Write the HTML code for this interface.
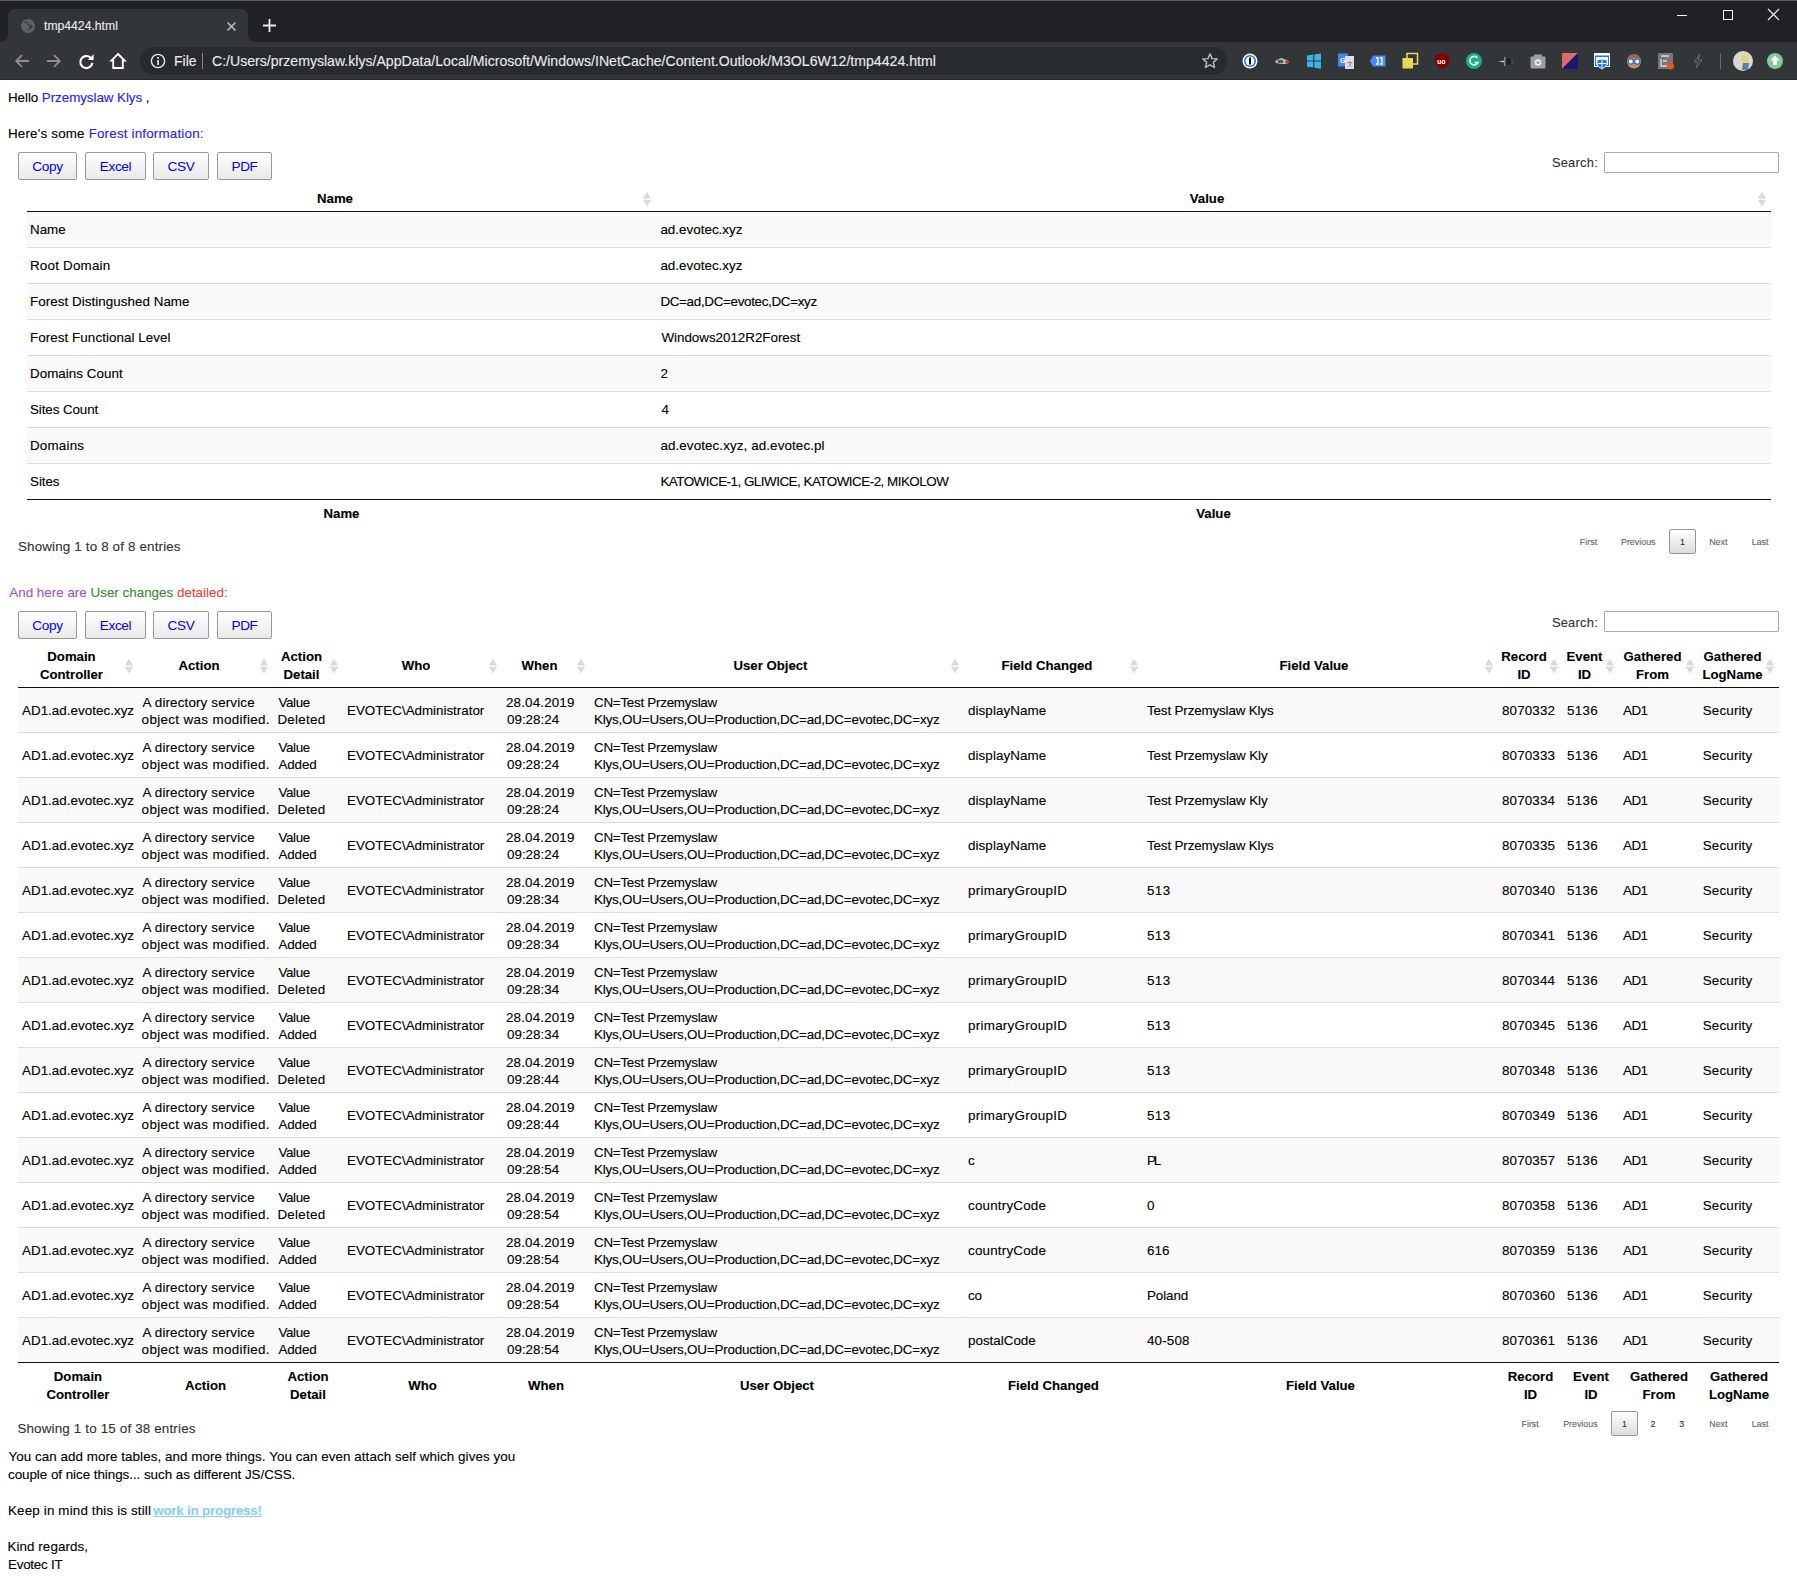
<!DOCTYPE html>
<html><head><meta charset="utf-8"><title>tmp4424.html</title><style>
html,body{margin:0;padding:0;}
body{width:1797px;height:1585px;overflow:hidden;position:relative;background:#fff;font-family:"Liberation Sans",sans-serif;}
.t{position:absolute;white-space:nowrap;font-size:13.4px;line-height:18px;color:#000;-webkit-text-stroke:0.12px currentColor;}
.btn{position:absolute;border:1px solid #999;border-radius:2px;background:linear-gradient(to bottom,#fff 0%,#e9e9e9 100%);font-family:"Liberation Sans",sans-serif;font-size:13.6px;line-height:27px;letter-spacing:-0.35px;text-align:center;color:#0000ff;}
.pgb{position:absolute;border:1px solid #979797;border-radius:2px;background:linear-gradient(to bottom,#fff 0%,#dcdcdc 100%);}
</style></head>
<body>
<div id="chrome" style="position:absolute;left:0;top:0;width:1797px;height:80px;background:#202124;overflow:hidden">
<div style="position:absolute;left:0;top:0;width:1797px;height:1px;background:#5b5a59"></div>
<div style="position:absolute;left:0;top:42px;width:1797px;height:37px;background:#333639"></div>
<div style="position:absolute;left:0;top:79px;width:1797px;height:1px;background:#262727"></div>
<div style="position:absolute;left:8px;top:9px;width:240px;height:34px;background:#333639;border-radius:7px 7px 0 0"></div>
<svg style="position:absolute;left:0;top:34px" width="8" height="8"><path d="M0 8 Q8 8 8 0 L8 8Z" fill="#333639"/></svg>
<svg style="position:absolute;left:248px;top:34px" width="8" height="8"><path d="M8 8 Q0 8 0 0 L0 8Z" fill="#333639"/></svg>
<svg style="position:absolute;left:20px;top:18px" width="16" height="16" viewBox="0 0 16 16"><circle cx="8" cy="8" r="7" fill="#5f6368"/><path d="M3 6 Q5 3 8 3 Q6 5 8 7 Q10 8 9 10 Q8 12 6 13 Q9 12 12 10 Q13 9 12 7 Q10 8 9 6 Q8 4 5 5Z" fill="#333639" opacity="0.9"/></svg>
<div class="t" style="left:44px;top:18px;font-size:12.2px;line-height:16px;color:#e8eaed">tmp4424.html</div>
<svg style="position:absolute;left:226px;top:21px" width="11" height="11" viewBox="0 0 11 11"><path d="M1.5 1.5 L9.5 9.5 M9.5 1.5 L1.5 9.5" stroke="#bdc1c6" stroke-width="1.5"/></svg>
<svg style="position:absolute;left:262px;top:18px" width="15" height="15" viewBox="0 0 15 15"><path d="M7.5 1 L7.5 14 M1 7.5 L14 7.5" stroke="#e8eaed" stroke-width="1.8"/></svg>
<svg style="position:absolute;left:1677px;top:15px" width="10" height="2"><rect width="10" height="1" fill="#ffffff"/></svg>
<svg style="position:absolute;left:1722px;top:9px" width="12" height="12"><rect x="1.5" y="1.5" width="9" height="9" fill="none" stroke="#ffffff" stroke-width="1"/></svg>
<svg style="position:absolute;left:1767px;top:8px" width="13" height="13" viewBox="0 0 13 13"><path d="M1 1 L12 12 M12 1 L1 12" stroke="#e8eaed" stroke-width="1.3"/></svg>
<svg style="position:absolute;left:14px;top:53px" width="16" height="16" viewBox="0 0 16 16"><path d="M15 8 H2.5 M8 2.2 L2.2 8 L8 13.8" fill="none" stroke="#8d8e90" stroke-width="1.8"/></svg>
<svg style="position:absolute;left:46px;top:53px" width="16" height="16" viewBox="0 0 16 16"><path d="M1 8 H13.5 M8 2.2 L13.8 8 L8 13.8" fill="none" stroke="#8d8e90" stroke-width="1.8"/></svg>
<svg style="position:absolute;left:77.5px;top:52.7px" width="17" height="17" viewBox="0 0 17 17"><path d="M14.3 9.8 A6 6 0 1 1 12.4 4.6" fill="none" stroke="#ffffff" stroke-width="2.2"/><path d="M15.6 1.2 V7 H9.8Z" fill="#ffffff"/></svg>
<svg style="position:absolute;left:109px;top:52px" width="18" height="18" viewBox="0 0 18 18"><path d="M9 2 L15.6 8.6 H13.8 V16 H4.2 V8.6 H2.4Z" fill="none" stroke="#ffffff" stroke-width="1.9" stroke-linejoin="miter"/></svg>
<div style="position:absolute;left:140px;top:47px;width:1087px;height:28px;background:#282b2e;border-radius:14px"></div>
<svg style="position:absolute;left:150px;top:53px" width="16" height="16" viewBox="0 0 16 16"><circle cx="8" cy="8" r="6.6" fill="none" stroke="#e8eaed" stroke-width="1.4"/><rect x="7.2" y="7" width="1.7" height="5" fill="#e8eaed"/><rect x="7.2" y="4" width="1.7" height="1.7" fill="#e8eaed"/></svg>
<div class="t" style="left:174px;top:53px;font-size:14px;line-height:16px;color:#e8eaed">File</div>
<div style="position:absolute;left:202px;top:53px;width:1px;height:16px;background:#80868b"></div>
<div class="t" style="left:212px;top:53px;font-size:14.1px;line-height:16px;color:#e8eaed">C:/Users/przemyslaw.klys/AppData/Local/Microsoft/Windows/INetCache/Content.Outlook/M3OL6W12/tmp4424.html</div>
<svg style="position:absolute;left:1201px;top:52px" width="18" height="18" viewBox="0 0 18 18"><path d="M9 1.8 L11.1 6.6 L16.2 7 L12.3 10.4 L13.5 15.5 L9 12.8 L4.5 15.5 L5.7 10.4 L1.8 7 L6.9 6.6Z" fill="none" stroke="#bdc1c6" stroke-width="1.4" stroke-linejoin="round"/></svg>
<svg style="position:absolute;left:1241px;top:52px" width="18" height="18" viewBox="0 0 18 18"><circle cx="9" cy="9" r="7.5" fill="#fff"/><circle cx="9" cy="9" r="6" fill="#1a73e8"/><circle cx="9" cy="9" r="4.5" fill="#fff"/><rect x="8" y="5.5" width="2" height="7" fill="#111"/></svg>
<svg style="position:absolute;left:1273px;top:52px" width="18" height="18" viewBox="0 0 18 18"><path d="M2 9 L8 6 L14 8 L16 10 L14 12 L8 12 L3 11Z" fill="#bbb"/><circle cx="14" cy="10" r="1.8" fill="#c0392b"/><rect x="5" y="8" width="5" height="3" fill="#555"/></svg>
<svg style="position:absolute;left:1305px;top:52px" width="18" height="18" viewBox="0 0 18 18"><path d="M2 3.5 L8.2 2.6 V8.6 H2Z M9.3 2.4 L16 1.5 V8.6 H9.3Z M2 9.6 H8.2 V15.6 L2 14.7Z M9.3 9.6 H16 V16.7 L9.3 15.8Z" fill="#3cb4e7"/></svg>
<svg style="position:absolute;left:1337px;top:52px" width="18" height="18" viewBox="0 0 18 18"><rect x="1" y="1.5" width="10" height="13" fill="#4285f4"/><path d="M8 4 H17 V17 H8Z" fill="#e0e0e0"/><text x="3" y="11" font-size="7" fill="#fff" font-family="Liberation Sans" font-weight="bold">G</text><text x="10" y="14" font-size="6" fill="#666" font-family="Liberation Sans">文</text></svg>
<svg style="position:absolute;left:1369px;top:52px" width="18" height="18" viewBox="0 0 18 18"><path d="M4 3.5 H16.5 V14.5 H4 L1 9Z" fill="#4a8af4"/><path d="M7 6 H9 V12 H7 M11 6 H13 V12 H11" fill="none" stroke="#fff" stroke-width="1.3"/></svg>
<svg style="position:absolute;left:1401px;top:52px" width="18" height="18" viewBox="0 0 18 18"><rect x="6" y="1.5" width="10.5" height="10.5" fill="none" stroke="#e6d95a" stroke-width="1.5"/><rect x="1.5" y="6" width="10.5" height="10.5" fill="#e6d95a"/></svg>
<svg style="position:absolute;left:1433px;top:52px" width="18" height="18" viewBox="0 0 18 18"><path d="M9 1 L16 3.5 V9 Q16 14 9 17 Q2 14 2 9 V3.5Z" fill="#800000"/><text x="4" y="11.5" font-size="7" fill="#fff" font-family="Liberation Sans" font-weight="bold">uo</text></svg>
<svg style="position:absolute;left:1465px;top:52px" width="18" height="18" viewBox="0 0 18 18"><circle cx="9" cy="9" r="8" fill="#15c39a" opacity="0.85"/><path d="M12.5 6 A4.3 4.3 0 1 0 13 10.5 H9.5" fill="none" stroke="#fff" stroke-width="1.6"/></svg>
<svg style="position:absolute;left:1497px;top:52px" width="18" height="18" viewBox="0 0 18 18"><path d="M1 9.5 L8 8.5 L8 10.5Z" fill="#ccc"/><rect x="8" y="6.5" width="6" height="6" fill="#222"/><rect x="14" y="7" width="2.5" height="5" fill="#444"/><rect x="7" y="5" width="1.5" height="9" fill="#888"/></svg>
<svg style="position:absolute;left:1529px;top:52px" width="18" height="18" viewBox="0 0 18 18"><rect x="1.5" y="4.5" width="15" height="12" rx="1" fill="#9e9e9e"/><rect x="5" y="2.5" width="8" height="3" fill="#9e9e9e"/><circle cx="9" cy="10.5" r="3.2" fill="#eee"/><circle cx="9" cy="10.5" r="1.6" fill="#9e9e9e"/></svg>
<svg style="position:absolute;left:1561px;top:52px" width="18" height="18" viewBox="0 0 18 18"><path d="M1 1 H17 L1 17Z" fill="#dc6b65"/><path d="M17 1 V17 H1Z" fill="#1a1a6b"/></svg>
<svg style="position:absolute;left:1593px;top:52px" width="18" height="18" viewBox="0 0 18 18"><rect x="1" y="1" width="16" height="14" fill="#fff"/><rect x="2" y="3.5" width="14" height="10.5" fill="#1a73e8"/><rect x="3" y="5" width="12" height="8" fill="#fff"/><path d="M9 7 L14 8 V11 Q14 15 9 17 Q4 15 4 11 V8Z" fill="#1a73e8" stroke="#fff" stroke-width="0.8"/><path d="M9 8 V16 M5 11.5 H13" stroke="#fff" stroke-width="1"/></svg>
<svg style="position:absolute;left:1625px;top:52px" width="18" height="18" viewBox="0 0 18 18"><circle cx="9" cy="9.5" r="7" fill="#c98d5b"/><path d="M2 8 Q3 2 9 2 Q15 2 16 8 L14 6 H4Z" fill="#9b6a3e"/><circle cx="5.8" cy="9.5" r="2.6" fill="#fff" stroke="#2b6cd4" stroke-width="1.2"/><circle cx="12.2" cy="9.5" r="2.6" fill="#fff" stroke="#2b6cd4" stroke-width="1.2"/></svg>
<svg style="position:absolute;left:1657px;top:52px" width="18" height="18" viewBox="0 0 18 18"><rect x="1" y="1" width="15" height="16" rx="1" fill="#777"/><path d="M4 4 H12 M4 7 V14 H10 M6 9 H10" stroke="#ddd" stroke-width="1.3" fill="none"/><circle cx="13.5" cy="14" r="3.5" fill="#e8561f"/></svg>
<svg style="position:absolute;left:1689px;top:52px" width="18" height="18" viewBox="0 0 18 18"><path d="M11 2 L5 10 H9 L7 16 L13 8 H9Z" fill="none" stroke="#6b6c6f" stroke-width="1"/></svg>
<div style="position:absolute;left:1720px;top:53px;width:1px;height:16px;background:#6b6c6f"></div>
<svg style="position:absolute;left:1733px;top:51px" width="20" height="20" viewBox="0 0 20 20"><circle cx="10" cy="10" r="10" fill="#d8d8d0"/><path d="M9 4 Q14 3 15 8 L15 18 Q12 20 8 19 L9 12 Q7 8 9 4Z" fill="#e6d27a"/><path d="M10 12 L16 12 L15 19 L9 19Z" fill="#5a7fb5"/></svg>
<svg style="position:absolute;left:1765px;top:51px" width="20" height="20" viewBox="0 0 20 20"><circle cx="10" cy="10" r="8" fill="#81c995"/><path d="M10 4.5 L15 9.5 H12 V14 H8 V9.5 H5Z" fill="#fff"/></svg>
</div>
<div class="t" id="t1" style="left:8.00px;top:89.06px;letter-spacing:-0.064px;">Hello <span style="color:#2323ff">Przemyslaw Klys</span> ,</div>
<div class="t" id="t2" style="left:8.00px;top:125.26px;letter-spacing:0.180px;">Here's some <span style="color:#2323ff">Forest information:</span></div>
<div class="btn" style="left:18px;top:152px;width:57px;height:26px"><span>Copy</span></div>
<div class="btn" style="left:85px;top:152px;width:59px;height:26px"><span>Excel</span></div>
<div class="btn" style="left:153px;top:152px;width:54px;height:26px"><span>CSV</span></div>
<div class="btn" style="left:217px;top:152px;width:53px;height:26px"><span>PDF</span></div>
<div class="t" id="t3" style="left:1551.90px;top:154.43px;letter-spacing:0.233px;font-size:12.9px;color:#333;">Search:</div>
<div style="position:absolute;left:1604px;top:152px;width:173px;height:19px;border:1px solid #a9a9a9;border-radius:1px;background:#fff"></div>
<div class="t" style="left:35.00px;top:189.63px;width:600px;text-align:center;font-size:13.2px;font-weight:bold;">Name</div>
<div class="t" style="left:907.00px;top:189.63px;width:600px;text-align:center;font-size:13.2px;font-weight:bold;">Value</div>
<svg style="position:absolute;left:641.50px;top:190.50px" width="10" height="16" viewBox="0 0 10 16"><path d="M5 0.8 L9.2 7.5 L0.8 7.5Z M0.8 8.8 L9.2 8.8 L5 15.6Z" fill="#dadada"/></svg>
<svg style="position:absolute;left:1756.50px;top:190.50px" width="10" height="16" viewBox="0 0 10 16"><path d="M5 0.8 L9.2 7.5 L0.8 7.5Z M0.8 8.8 L9.2 8.8 L5 15.6Z" fill="#dadada"/></svg>
<div style="position:absolute;left:27px;top:211px;width:1744px;height:1px;background:#111"></div>
<div style="position:absolute;left:27px;top:212px;width:1744px;height:35px;background:#f9f9f9"></div>
<div style="position:absolute;left:27px;top:247px;width:1744px;height:1px;background:#ddd"></div>
<div class="t" id="t4" style="left:30.00px;top:221.06px;letter-spacing:0.000px;">Name</div>
<div class="t" id="t5" style="left:660.40px;top:221.06px;letter-spacing:0.017px;">ad.evotec.xyz</div>
<div style="position:absolute;left:27px;top:283px;width:1744px;height:1px;background:#ddd"></div>
<div class="t" id="t6" style="left:30.00px;top:257.06px;letter-spacing:0.200px;">Root Domain</div>
<div class="t" id="t7" style="left:660.40px;top:257.06px;letter-spacing:0.017px;">ad.evotec.xyz</div>
<div style="position:absolute;left:27px;top:284px;width:1744px;height:35px;background:#f9f9f9"></div>
<div style="position:absolute;left:27px;top:319px;width:1744px;height:1px;background:#ddd"></div>
<div class="t" id="t8" style="left:30.00px;top:293.06px;letter-spacing:0.043px;">Forest Distingushed Name</div>
<div class="t" id="t9" style="left:660.40px;top:293.06px;letter-spacing:-0.314px;">DC=ad,DC=evotec,DC=xyz</div>
<div style="position:absolute;left:27px;top:355px;width:1744px;height:1px;background:#ddd"></div>
<div class="t" id="t10" style="left:30.00px;top:329.06px;letter-spacing:0.064px;">Forest Functional Level</div>
<div class="t" id="t11" style="left:661.40px;top:329.06px;letter-spacing:-0.022px;">Windows2012R2Forest</div>
<div style="position:absolute;left:27px;top:356px;width:1744px;height:35px;background:#f9f9f9"></div>
<div style="position:absolute;left:27px;top:391px;width:1744px;height:1px;background:#ddd"></div>
<div class="t" id="t12" style="left:30.00px;top:365.06px;letter-spacing:0.033px;">Domains Count</div>
<div class="t" id="t13" style="left:660.40px;top:365.06px;letter-spacing:-1.000px;">2</div>
<div style="position:absolute;left:27px;top:427px;width:1744px;height:1px;background:#ddd"></div>
<div class="t" id="t14" style="left:30.00px;top:401.06px;letter-spacing:-0.100px;">Sites Count</div>
<div class="t" id="t15" style="left:661.40px;top:401.06px;letter-spacing:-4.000px;">4</div>
<div style="position:absolute;left:27px;top:428px;width:1744px;height:35px;background:#f9f9f9"></div>
<div style="position:absolute;left:27px;top:463px;width:1744px;height:1px;background:#ddd"></div>
<div class="t" id="t16" style="left:30.00px;top:437.06px;letter-spacing:0.200px;">Domains</div>
<div class="t" id="t17" style="left:660.40px;top:437.06px;letter-spacing:0.100px;">ad.evotec.xyz, ad.evotec.pl</div>
<div class="t" id="t18" style="left:30.00px;top:473.06px;letter-spacing:-0.050px;">Sites</div>
<div class="t" id="t19" style="left:660.40px;top:473.06px;letter-spacing:-0.497px;">KATOWICE-1, GLIWICE, KATOWICE-2, MIKOLOW</div>
<div style="position:absolute;left:27px;top:499px;width:1744px;height:1px;background:#111"></div>
<div class="t" style="left:41.50px;top:505.23px;width:600px;text-align:center;font-size:13.2px;font-weight:bold;">Name</div>
<div class="t" style="left:913.50px;top:505.23px;width:600px;text-align:center;font-size:13.2px;font-weight:bold;">Value</div>
<div class="t" id="t20" style="left:18.00px;top:538.16px;letter-spacing:0.154px;color:#333;">Showing 1 to 8 of 8 entries</div>
<div class="pgb" style="left:1669px;top:529px;width:25px;height:23px"></div>
<div class="t" style="left:1288.50px;top:535.72px;width:600px;text-align:center;font-size:8.9px;line-height:12px;color:#666;">First</div>
<div class="t" style="left:1338.25px;top:535.72px;width:600px;text-align:center;font-size:8.9px;line-height:12px;color:#666;">Previous</div>
<div class="t" style="left:1382.50px;top:535.72px;width:600px;text-align:center;font-size:8.9px;line-height:12px;color:#333;">1</div>
<div class="t" style="left:1418.30px;top:535.72px;width:600px;text-align:center;font-size:8.9px;line-height:12px;color:#666;">Next</div>
<div class="t" style="left:1460.10px;top:535.72px;width:600px;text-align:center;font-size:8.9px;line-height:12px;color:#666;">Last</div>
<div class="t" id="t21" style="left:9.30px;top:584.06px;letter-spacing:0.006px;"><span style="color:#9b59d0">And here are</span> <span style="color:#3b8a3b">User changes</span> <span style="color:#f0413c">detailed:</span></div>
<div class="btn" style="left:18px;top:611px;width:57px;height:26px"><span>Copy</span></div>
<div class="btn" style="left:85px;top:611px;width:59px;height:26px"><span>Excel</span></div>
<div class="btn" style="left:153px;top:611px;width:54px;height:26px"><span>CSV</span></div>
<div class="btn" style="left:217px;top:611px;width:53px;height:26px"><span>PDF</span></div>
<div class="t" id="t22" style="left:1551.90px;top:613.63px;letter-spacing:0.233px;font-size:12.9px;color:#333;">Search:</div>
<div style="position:absolute;left:1604px;top:611px;width:173px;height:19px;border:1px solid #a9a9a9;border-radius:1px;background:#fff"></div>
<div class="t" style="left:-228.50px;top:648.23px;width:600px;text-align:center;font-size:13.2px;font-weight:bold;">Domain</div>
<div class="t" style="left:-228.50px;top:666.33px;width:600px;text-align:center;font-size:13.2px;font-weight:bold;">Controller</div>
<div class="t" style="left:-222.00px;top:1368.03px;width:600px;text-align:center;font-size:13.2px;font-weight:bold;">Domain</div>
<div class="t" style="left:-222.00px;top:1385.73px;width:600px;text-align:center;font-size:13.2px;font-weight:bold;">Controller</div>
<svg style="position:absolute;left:123.50px;top:657.50px" width="10" height="16" viewBox="0 0 10 16"><path d="M5 0.8 L9.2 7.5 L0.8 7.5Z M0.8 8.8 L9.2 8.8 L5 15.6Z" fill="#dadada"/></svg>
<div class="t" style="left:-101.00px;top:657.23px;width:600px;text-align:center;font-size:13.2px;font-weight:bold;">Action</div>
<div class="t" style="left:-94.50px;top:1376.93px;width:600px;text-align:center;font-size:13.2px;font-weight:bold;">Action</div>
<svg style="position:absolute;left:258.50px;top:657.50px" width="10" height="16" viewBox="0 0 10 16"><path d="M5 0.8 L9.2 7.5 L0.8 7.5Z M0.8 8.8 L9.2 8.8 L5 15.6Z" fill="#dadada"/></svg>
<div class="t" style="left:1.50px;top:648.23px;width:600px;text-align:center;font-size:13.2px;font-weight:bold;">Action</div>
<div class="t" style="left:1.50px;top:666.33px;width:600px;text-align:center;font-size:13.2px;font-weight:bold;">Detail</div>
<div class="t" style="left:8.00px;top:1368.03px;width:600px;text-align:center;font-size:13.2px;font-weight:bold;">Action</div>
<div class="t" style="left:8.00px;top:1385.73px;width:600px;text-align:center;font-size:13.2px;font-weight:bold;">Detail</div>
<svg style="position:absolute;left:328.50px;top:657.50px" width="10" height="16" viewBox="0 0 10 16"><path d="M5 0.8 L9.2 7.5 L0.8 7.5Z M0.8 8.8 L9.2 8.8 L5 15.6Z" fill="#dadada"/></svg>
<div class="t" style="left:116.00px;top:657.23px;width:600px;text-align:center;font-size:13.2px;font-weight:bold;">Who</div>
<div class="t" style="left:122.50px;top:1376.93px;width:600px;text-align:center;font-size:13.2px;font-weight:bold;">Who</div>
<svg style="position:absolute;left:487.50px;top:657.50px" width="10" height="16" viewBox="0 0 10 16"><path d="M5 0.8 L9.2 7.5 L0.8 7.5Z M0.8 8.8 L9.2 8.8 L5 15.6Z" fill="#dadada"/></svg>
<div class="t" style="left:239.50px;top:657.23px;width:600px;text-align:center;font-size:13.2px;font-weight:bold;">When</div>
<div class="t" style="left:246.00px;top:1376.93px;width:600px;text-align:center;font-size:13.2px;font-weight:bold;">When</div>
<svg style="position:absolute;left:575.50px;top:657.50px" width="10" height="16" viewBox="0 0 10 16"><path d="M5 0.8 L9.2 7.5 L0.8 7.5Z M0.8 8.8 L9.2 8.8 L5 15.6Z" fill="#dadada"/></svg>
<div class="t" style="left:470.50px;top:657.23px;width:600px;text-align:center;font-size:13.2px;font-weight:bold;">User Object</div>
<div class="t" style="left:477.00px;top:1376.93px;width:600px;text-align:center;font-size:13.2px;font-weight:bold;">User Object</div>
<svg style="position:absolute;left:949.50px;top:657.50px" width="10" height="16" viewBox="0 0 10 16"><path d="M5 0.8 L9.2 7.5 L0.8 7.5Z M0.8 8.8 L9.2 8.8 L5 15.6Z" fill="#dadada"/></svg>
<div class="t" style="left:747.00px;top:657.23px;width:600px;text-align:center;font-size:13.2px;font-weight:bold;">Field Changed</div>
<div class="t" style="left:753.50px;top:1376.93px;width:600px;text-align:center;font-size:13.2px;font-weight:bold;">Field Changed</div>
<svg style="position:absolute;left:1128.50px;top:657.50px" width="10" height="16" viewBox="0 0 10 16"><path d="M5 0.8 L9.2 7.5 L0.8 7.5Z M0.8 8.8 L9.2 8.8 L5 15.6Z" fill="#dadada"/></svg>
<div class="t" style="left:1014.00px;top:657.23px;width:600px;text-align:center;font-size:13.2px;font-weight:bold;">Field Value</div>
<div class="t" style="left:1020.50px;top:1376.93px;width:600px;text-align:center;font-size:13.2px;font-weight:bold;">Field Value</div>
<svg style="position:absolute;left:1483.50px;top:657.50px" width="10" height="16" viewBox="0 0 10 16"><path d="M5 0.8 L9.2 7.5 L0.8 7.5Z M0.8 8.8 L9.2 8.8 L5 15.6Z" fill="#dadada"/></svg>
<div class="t" style="left:1224.00px;top:648.23px;width:600px;text-align:center;font-size:13.2px;font-weight:bold;">Record</div>
<div class="t" style="left:1224.00px;top:666.33px;width:600px;text-align:center;font-size:13.2px;font-weight:bold;">ID</div>
<div class="t" style="left:1230.50px;top:1368.03px;width:600px;text-align:center;font-size:13.2px;font-weight:bold;">Record</div>
<div class="t" style="left:1230.50px;top:1385.73px;width:600px;text-align:center;font-size:13.2px;font-weight:bold;">ID</div>
<svg style="position:absolute;left:1548.50px;top:657.50px" width="10" height="16" viewBox="0 0 10 16"><path d="M5 0.8 L9.2 7.5 L0.8 7.5Z M0.8 8.8 L9.2 8.8 L5 15.6Z" fill="#dadada"/></svg>
<div class="t" style="left:1284.50px;top:648.23px;width:600px;text-align:center;font-size:13.2px;font-weight:bold;">Event</div>
<div class="t" style="left:1284.50px;top:666.33px;width:600px;text-align:center;font-size:13.2px;font-weight:bold;">ID</div>
<div class="t" style="left:1291.00px;top:1368.03px;width:600px;text-align:center;font-size:13.2px;font-weight:bold;">Event</div>
<div class="t" style="left:1291.00px;top:1385.73px;width:600px;text-align:center;font-size:13.2px;font-weight:bold;">ID</div>
<svg style="position:absolute;left:1604.50px;top:657.50px" width="10" height="16" viewBox="0 0 10 16"><path d="M5 0.8 L9.2 7.5 L0.8 7.5Z M0.8 8.8 L9.2 8.8 L5 15.6Z" fill="#dadada"/></svg>
<div class="t" style="left:1352.50px;top:648.23px;width:600px;text-align:center;font-size:13.2px;font-weight:bold;">Gathered</div>
<div class="t" style="left:1352.50px;top:666.33px;width:600px;text-align:center;font-size:13.2px;font-weight:bold;">From</div>
<div class="t" style="left:1359.00px;top:1368.03px;width:600px;text-align:center;font-size:13.2px;font-weight:bold;">Gathered</div>
<div class="t" style="left:1359.00px;top:1385.73px;width:600px;text-align:center;font-size:13.2px;font-weight:bold;">From</div>
<svg style="position:absolute;left:1684.50px;top:657.50px" width="10" height="16" viewBox="0 0 10 16"><path d="M5 0.8 L9.2 7.5 L0.8 7.5Z M0.8 8.8 L9.2 8.8 L5 15.6Z" fill="#dadada"/></svg>
<div class="t" style="left:1432.50px;top:648.23px;width:600px;text-align:center;font-size:13.2px;font-weight:bold;">Gathered</div>
<div class="t" style="left:1432.50px;top:666.33px;width:600px;text-align:center;font-size:13.2px;font-weight:bold;">LogName</div>
<div class="t" style="left:1439.00px;top:1368.03px;width:600px;text-align:center;font-size:13.2px;font-weight:bold;">Gathered</div>
<div class="t" style="left:1439.00px;top:1385.73px;width:600px;text-align:center;font-size:13.2px;font-weight:bold;">LogName</div>
<svg style="position:absolute;left:1764.50px;top:657.50px" width="10" height="16" viewBox="0 0 10 16"><path d="M5 0.8 L9.2 7.5 L0.8 7.5Z M0.8 8.8 L9.2 8.8 L5 15.6Z" fill="#dadada"/></svg>
<div style="position:absolute;left:18px;top:687px;width:1761px;height:1px;background:#111"></div>
<div style="position:absolute;left:18px;top:1362px;width:1761px;height:1px;background:#111"></div>
<div style="position:absolute;left:18px;top:688px;width:1761px;height:44px;background:#f9f9f9"></div>
<div style="position:absolute;left:18px;top:732px;width:1761px;height:1px;background:#ddd"></div>
<div class="t" id="t23" style="left:22.00px;top:702.26px;letter-spacing:0.025px;">AD1.ad.evotec.xyz</div>
<div class="t" id="t24" style="left:142.60px;top:693.56px;letter-spacing:0.144px;">A directory service</div>
<div class="t" id="t25" style="left:141.60px;top:711.06px;letter-spacing:0.347px;">object was modified.</div>
<div class="t" id="t26" style="left:278.40px;top:693.56px;letter-spacing:-0.350px;">Value</div>
<div class="t" id="t27" style="left:277.40px;top:711.06px;letter-spacing:0.267px;">Deleted</div>
<div class="t" id="t28" style="left:347.00px;top:702.26px;letter-spacing:-0.021px;">EVOTEC\Administrator</div>
<div class="t" id="t29" style="left:506.00px;top:693.56px;letter-spacing:0.156px;">28.04.2019</div>
<div class="t" id="t30" style="left:507.00px;top:711.06px;letter-spacing:0.000px;">09:28:24</div>
<div class="t" id="t31" style="left:594.00px;top:693.56px;letter-spacing:-0.259px;">CN=Test Przemyslaw</div>
<div class="t" id="t32" style="left:594.00px;top:711.06px;letter-spacing:-0.184px;">Klys,OU=Users,OU=Production,DC=ad,DC=evotec,DC=xyz</div>
<div class="t" id="t33" style="left:968.00px;top:702.26px;letter-spacing:0.080px;">displayName</div>
<div class="t" id="t34" style="left:1147.00px;top:702.26px;letter-spacing:-0.147px;">Test Przemyslaw Klys</div>
<div class="t" id="t35" style="left:1502.00px;top:702.26px;letter-spacing:0.133px;">8070332</div>
<div class="t" id="t36" style="left:1567.00px;top:702.26px;letter-spacing:0.267px;">5136</div>
<div class="t" id="t37" style="left:1623.00px;top:702.26px;letter-spacing:-0.500px;">AD1</div>
<div class="t" id="t38" style="left:1702.80px;top:702.26px;letter-spacing:0.143px;">Security</div>
<div style="position:absolute;left:18px;top:777px;width:1761px;height:1px;background:#ddd"></div>
<div class="t" id="t39" style="left:22.00px;top:747.26px;letter-spacing:0.025px;">AD1.ad.evotec.xyz</div>
<div class="t" id="t40" style="left:142.60px;top:738.56px;letter-spacing:0.144px;">A directory service</div>
<div class="t" id="t41" style="left:141.60px;top:756.06px;letter-spacing:0.347px;">object was modified.</div>
<div class="t" id="t42" style="left:278.40px;top:738.56px;letter-spacing:-0.350px;">Value</div>
<div class="t" id="t43" style="left:278.40px;top:756.06px;letter-spacing:-0.100px;">Added</div>
<div class="t" id="t44" style="left:347.00px;top:747.26px;letter-spacing:-0.021px;">EVOTEC\Administrator</div>
<div class="t" id="t45" style="left:506.00px;top:738.56px;letter-spacing:0.156px;">28.04.2019</div>
<div class="t" id="t46" style="left:507.00px;top:756.06px;letter-spacing:0.000px;">09:28:24</div>
<div class="t" id="t47" style="left:594.00px;top:738.56px;letter-spacing:-0.259px;">CN=Test Przemyslaw</div>
<div class="t" id="t48" style="left:594.00px;top:756.06px;letter-spacing:-0.184px;">Klys,OU=Users,OU=Production,DC=ad,DC=evotec,DC=xyz</div>
<div class="t" id="t49" style="left:968.00px;top:747.26px;letter-spacing:0.080px;">displayName</div>
<div class="t" id="t50" style="left:1147.00px;top:747.26px;letter-spacing:-0.122px;">Test Przemyslaw Kly</div>
<div class="t" id="t51" style="left:1502.00px;top:747.26px;letter-spacing:0.133px;">8070333</div>
<div class="t" id="t52" style="left:1567.00px;top:747.26px;letter-spacing:0.267px;">5136</div>
<div class="t" id="t53" style="left:1623.00px;top:747.26px;letter-spacing:-0.500px;">AD1</div>
<div class="t" id="t54" style="left:1702.80px;top:747.26px;letter-spacing:0.143px;">Security</div>
<div style="position:absolute;left:18px;top:778px;width:1761px;height:44px;background:#f9f9f9"></div>
<div style="position:absolute;left:18px;top:822px;width:1761px;height:1px;background:#ddd"></div>
<div class="t" id="t55" style="left:22.00px;top:792.26px;letter-spacing:0.025px;">AD1.ad.evotec.xyz</div>
<div class="t" id="t56" style="left:142.60px;top:783.56px;letter-spacing:0.144px;">A directory service</div>
<div class="t" id="t57" style="left:141.60px;top:801.06px;letter-spacing:0.347px;">object was modified.</div>
<div class="t" id="t58" style="left:278.40px;top:783.56px;letter-spacing:-0.350px;">Value</div>
<div class="t" id="t59" style="left:277.40px;top:801.06px;letter-spacing:0.267px;">Deleted</div>
<div class="t" id="t60" style="left:347.00px;top:792.26px;letter-spacing:-0.021px;">EVOTEC\Administrator</div>
<div class="t" id="t61" style="left:506.00px;top:783.56px;letter-spacing:0.156px;">28.04.2019</div>
<div class="t" id="t62" style="left:507.00px;top:801.06px;letter-spacing:0.000px;">09:28:24</div>
<div class="t" id="t63" style="left:594.00px;top:783.56px;letter-spacing:-0.259px;">CN=Test Przemyslaw</div>
<div class="t" id="t64" style="left:594.00px;top:801.06px;letter-spacing:-0.184px;">Klys,OU=Users,OU=Production,DC=ad,DC=evotec,DC=xyz</div>
<div class="t" id="t65" style="left:968.00px;top:792.26px;letter-spacing:0.080px;">displayName</div>
<div class="t" id="t66" style="left:1147.00px;top:792.26px;letter-spacing:-0.122px;">Test Przemyslaw Kly</div>
<div class="t" id="t67" style="left:1502.00px;top:792.26px;letter-spacing:0.133px;">8070334</div>
<div class="t" id="t68" style="left:1567.00px;top:792.26px;letter-spacing:0.267px;">5136</div>
<div class="t" id="t69" style="left:1623.00px;top:792.26px;letter-spacing:-0.500px;">AD1</div>
<div class="t" id="t70" style="left:1702.80px;top:792.26px;letter-spacing:0.143px;">Security</div>
<div style="position:absolute;left:18px;top:867px;width:1761px;height:1px;background:#ddd"></div>
<div class="t" id="t71" style="left:22.00px;top:837.26px;letter-spacing:0.025px;">AD1.ad.evotec.xyz</div>
<div class="t" id="t72" style="left:142.60px;top:828.56px;letter-spacing:0.144px;">A directory service</div>
<div class="t" id="t73" style="left:141.60px;top:846.06px;letter-spacing:0.347px;">object was modified.</div>
<div class="t" id="t74" style="left:278.40px;top:828.56px;letter-spacing:-0.350px;">Value</div>
<div class="t" id="t75" style="left:278.40px;top:846.06px;letter-spacing:-0.100px;">Added</div>
<div class="t" id="t76" style="left:347.00px;top:837.26px;letter-spacing:-0.021px;">EVOTEC\Administrator</div>
<div class="t" id="t77" style="left:506.00px;top:828.56px;letter-spacing:0.156px;">28.04.2019</div>
<div class="t" id="t78" style="left:507.00px;top:846.06px;letter-spacing:0.000px;">09:28:24</div>
<div class="t" id="t79" style="left:594.00px;top:828.56px;letter-spacing:-0.259px;">CN=Test Przemyslaw</div>
<div class="t" id="t80" style="left:594.00px;top:846.06px;letter-spacing:-0.184px;">Klys,OU=Users,OU=Production,DC=ad,DC=evotec,DC=xyz</div>
<div class="t" id="t81" style="left:968.00px;top:837.26px;letter-spacing:0.080px;">displayName</div>
<div class="t" id="t82" style="left:1147.00px;top:837.26px;letter-spacing:-0.147px;">Test Przemyslaw Klys</div>
<div class="t" id="t83" style="left:1502.00px;top:837.26px;letter-spacing:0.133px;">8070335</div>
<div class="t" id="t84" style="left:1567.00px;top:837.26px;letter-spacing:0.267px;">5136</div>
<div class="t" id="t85" style="left:1623.00px;top:837.26px;letter-spacing:-0.500px;">AD1</div>
<div class="t" id="t86" style="left:1702.80px;top:837.26px;letter-spacing:0.143px;">Security</div>
<div style="position:absolute;left:18px;top:868px;width:1761px;height:44px;background:#f9f9f9"></div>
<div style="position:absolute;left:18px;top:912px;width:1761px;height:1px;background:#ddd"></div>
<div class="t" id="t87" style="left:22.00px;top:882.26px;letter-spacing:0.025px;">AD1.ad.evotec.xyz</div>
<div class="t" id="t88" style="left:142.60px;top:873.56px;letter-spacing:0.144px;">A directory service</div>
<div class="t" id="t89" style="left:141.60px;top:891.06px;letter-spacing:0.347px;">object was modified.</div>
<div class="t" id="t90" style="left:278.40px;top:873.56px;letter-spacing:-0.350px;">Value</div>
<div class="t" id="t91" style="left:277.40px;top:891.06px;letter-spacing:0.267px;">Deleted</div>
<div class="t" id="t92" style="left:347.00px;top:882.26px;letter-spacing:-0.021px;">EVOTEC\Administrator</div>
<div class="t" id="t93" style="left:506.00px;top:873.56px;letter-spacing:0.156px;">28.04.2019</div>
<div class="t" id="t94" style="left:507.00px;top:891.06px;letter-spacing:0.000px;">09:28:34</div>
<div class="t" id="t95" style="left:594.00px;top:873.56px;letter-spacing:-0.259px;">CN=Test Przemyslaw</div>
<div class="t" id="t96" style="left:594.00px;top:891.06px;letter-spacing:-0.184px;">Klys,OU=Users,OU=Production,DC=ad,DC=evotec,DC=xyz</div>
<div class="t" id="t97" style="left:968.00px;top:882.26px;letter-spacing:0.277px;">primaryGroupID</div>
<div class="t" id="t98" style="left:1147.00px;top:882.26px;letter-spacing:0.400px;">513</div>
<div class="t" id="t99" style="left:1502.00px;top:882.26px;letter-spacing:0.133px;">8070340</div>
<div class="t" id="t100" style="left:1567.00px;top:882.26px;letter-spacing:0.267px;">5136</div>
<div class="t" id="t101" style="left:1623.00px;top:882.26px;letter-spacing:-0.500px;">AD1</div>
<div class="t" id="t102" style="left:1702.80px;top:882.26px;letter-spacing:0.143px;">Security</div>
<div style="position:absolute;left:18px;top:957px;width:1761px;height:1px;background:#ddd"></div>
<div class="t" id="t103" style="left:22.00px;top:927.26px;letter-spacing:0.025px;">AD1.ad.evotec.xyz</div>
<div class="t" id="t104" style="left:142.60px;top:918.56px;letter-spacing:0.144px;">A directory service</div>
<div class="t" id="t105" style="left:141.60px;top:936.06px;letter-spacing:0.347px;">object was modified.</div>
<div class="t" id="t106" style="left:278.40px;top:918.56px;letter-spacing:-0.350px;">Value</div>
<div class="t" id="t107" style="left:278.40px;top:936.06px;letter-spacing:-0.100px;">Added</div>
<div class="t" id="t108" style="left:347.00px;top:927.26px;letter-spacing:-0.021px;">EVOTEC\Administrator</div>
<div class="t" id="t109" style="left:506.00px;top:918.56px;letter-spacing:0.156px;">28.04.2019</div>
<div class="t" id="t110" style="left:507.00px;top:936.06px;letter-spacing:0.000px;">09:28:34</div>
<div class="t" id="t111" style="left:594.00px;top:918.56px;letter-spacing:-0.259px;">CN=Test Przemyslaw</div>
<div class="t" id="t112" style="left:594.00px;top:936.06px;letter-spacing:-0.184px;">Klys,OU=Users,OU=Production,DC=ad,DC=evotec,DC=xyz</div>
<div class="t" id="t113" style="left:968.00px;top:927.26px;letter-spacing:0.277px;">primaryGroupID</div>
<div class="t" id="t114" style="left:1147.00px;top:927.26px;letter-spacing:0.400px;">513</div>
<div class="t" id="t115" style="left:1502.00px;top:927.26px;letter-spacing:0.133px;">8070341</div>
<div class="t" id="t116" style="left:1567.00px;top:927.26px;letter-spacing:0.267px;">5136</div>
<div class="t" id="t117" style="left:1623.00px;top:927.26px;letter-spacing:-0.500px;">AD1</div>
<div class="t" id="t118" style="left:1702.80px;top:927.26px;letter-spacing:0.143px;">Security</div>
<div style="position:absolute;left:18px;top:958px;width:1761px;height:44px;background:#f9f9f9"></div>
<div style="position:absolute;left:18px;top:1002px;width:1761px;height:1px;background:#ddd"></div>
<div class="t" id="t119" style="left:22.00px;top:972.26px;letter-spacing:0.025px;">AD1.ad.evotec.xyz</div>
<div class="t" id="t120" style="left:142.60px;top:963.56px;letter-spacing:0.144px;">A directory service</div>
<div class="t" id="t121" style="left:141.60px;top:981.06px;letter-spacing:0.347px;">object was modified.</div>
<div class="t" id="t122" style="left:278.40px;top:963.56px;letter-spacing:-0.350px;">Value</div>
<div class="t" id="t123" style="left:277.40px;top:981.06px;letter-spacing:0.267px;">Deleted</div>
<div class="t" id="t124" style="left:347.00px;top:972.26px;letter-spacing:-0.021px;">EVOTEC\Administrator</div>
<div class="t" id="t125" style="left:506.00px;top:963.56px;letter-spacing:0.156px;">28.04.2019</div>
<div class="t" id="t126" style="left:507.00px;top:981.06px;letter-spacing:0.000px;">09:28:34</div>
<div class="t" id="t127" style="left:594.00px;top:963.56px;letter-spacing:-0.259px;">CN=Test Przemyslaw</div>
<div class="t" id="t128" style="left:594.00px;top:981.06px;letter-spacing:-0.184px;">Klys,OU=Users,OU=Production,DC=ad,DC=evotec,DC=xyz</div>
<div class="t" id="t129" style="left:968.00px;top:972.26px;letter-spacing:0.277px;">primaryGroupID</div>
<div class="t" id="t130" style="left:1147.00px;top:972.26px;letter-spacing:0.400px;">513</div>
<div class="t" id="t131" style="left:1502.00px;top:972.26px;letter-spacing:0.133px;">8070344</div>
<div class="t" id="t132" style="left:1567.00px;top:972.26px;letter-spacing:0.267px;">5136</div>
<div class="t" id="t133" style="left:1623.00px;top:972.26px;letter-spacing:-0.500px;">AD1</div>
<div class="t" id="t134" style="left:1702.80px;top:972.26px;letter-spacing:0.143px;">Security</div>
<div style="position:absolute;left:18px;top:1047px;width:1761px;height:1px;background:#ddd"></div>
<div class="t" id="t135" style="left:22.00px;top:1017.26px;letter-spacing:0.025px;">AD1.ad.evotec.xyz</div>
<div class="t" id="t136" style="left:142.60px;top:1008.56px;letter-spacing:0.144px;">A directory service</div>
<div class="t" id="t137" style="left:141.60px;top:1026.06px;letter-spacing:0.347px;">object was modified.</div>
<div class="t" id="t138" style="left:278.40px;top:1008.56px;letter-spacing:-0.350px;">Value</div>
<div class="t" id="t139" style="left:278.40px;top:1026.06px;letter-spacing:-0.100px;">Added</div>
<div class="t" id="t140" style="left:347.00px;top:1017.26px;letter-spacing:-0.021px;">EVOTEC\Administrator</div>
<div class="t" id="t141" style="left:506.00px;top:1008.56px;letter-spacing:0.156px;">28.04.2019</div>
<div class="t" id="t142" style="left:507.00px;top:1026.06px;letter-spacing:0.000px;">09:28:34</div>
<div class="t" id="t143" style="left:594.00px;top:1008.56px;letter-spacing:-0.259px;">CN=Test Przemyslaw</div>
<div class="t" id="t144" style="left:594.00px;top:1026.06px;letter-spacing:-0.184px;">Klys,OU=Users,OU=Production,DC=ad,DC=evotec,DC=xyz</div>
<div class="t" id="t145" style="left:968.00px;top:1017.26px;letter-spacing:0.277px;">primaryGroupID</div>
<div class="t" id="t146" style="left:1147.00px;top:1017.26px;letter-spacing:0.400px;">513</div>
<div class="t" id="t147" style="left:1502.00px;top:1017.26px;letter-spacing:0.133px;">8070345</div>
<div class="t" id="t148" style="left:1567.00px;top:1017.26px;letter-spacing:0.267px;">5136</div>
<div class="t" id="t149" style="left:1623.00px;top:1017.26px;letter-spacing:-0.500px;">AD1</div>
<div class="t" id="t150" style="left:1702.80px;top:1017.26px;letter-spacing:0.143px;">Security</div>
<div style="position:absolute;left:18px;top:1048px;width:1761px;height:44px;background:#f9f9f9"></div>
<div style="position:absolute;left:18px;top:1092px;width:1761px;height:1px;background:#ddd"></div>
<div class="t" id="t151" style="left:22.00px;top:1062.26px;letter-spacing:0.025px;">AD1.ad.evotec.xyz</div>
<div class="t" id="t152" style="left:142.60px;top:1053.56px;letter-spacing:0.144px;">A directory service</div>
<div class="t" id="t153" style="left:141.60px;top:1071.06px;letter-spacing:0.347px;">object was modified.</div>
<div class="t" id="t154" style="left:278.40px;top:1053.56px;letter-spacing:-0.350px;">Value</div>
<div class="t" id="t155" style="left:277.40px;top:1071.06px;letter-spacing:0.267px;">Deleted</div>
<div class="t" id="t156" style="left:347.00px;top:1062.26px;letter-spacing:-0.021px;">EVOTEC\Administrator</div>
<div class="t" id="t157" style="left:506.00px;top:1053.56px;letter-spacing:0.156px;">28.04.2019</div>
<div class="t" id="t158" style="left:507.00px;top:1071.06px;letter-spacing:0.000px;">09:28:44</div>
<div class="t" id="t159" style="left:594.00px;top:1053.56px;letter-spacing:-0.259px;">CN=Test Przemyslaw</div>
<div class="t" id="t160" style="left:594.00px;top:1071.06px;letter-spacing:-0.184px;">Klys,OU=Users,OU=Production,DC=ad,DC=evotec,DC=xyz</div>
<div class="t" id="t161" style="left:968.00px;top:1062.26px;letter-spacing:0.277px;">primaryGroupID</div>
<div class="t" id="t162" style="left:1147.00px;top:1062.26px;letter-spacing:0.400px;">513</div>
<div class="t" id="t163" style="left:1502.00px;top:1062.26px;letter-spacing:0.133px;">8070348</div>
<div class="t" id="t164" style="left:1567.00px;top:1062.26px;letter-spacing:0.267px;">5136</div>
<div class="t" id="t165" style="left:1623.00px;top:1062.26px;letter-spacing:-0.500px;">AD1</div>
<div class="t" id="t166" style="left:1702.80px;top:1062.26px;letter-spacing:0.143px;">Security</div>
<div style="position:absolute;left:18px;top:1137px;width:1761px;height:1px;background:#ddd"></div>
<div class="t" id="t167" style="left:22.00px;top:1107.26px;letter-spacing:0.025px;">AD1.ad.evotec.xyz</div>
<div class="t" id="t168" style="left:142.60px;top:1098.56px;letter-spacing:0.144px;">A directory service</div>
<div class="t" id="t169" style="left:141.60px;top:1116.06px;letter-spacing:0.347px;">object was modified.</div>
<div class="t" id="t170" style="left:278.40px;top:1098.56px;letter-spacing:-0.350px;">Value</div>
<div class="t" id="t171" style="left:278.40px;top:1116.06px;letter-spacing:-0.100px;">Added</div>
<div class="t" id="t172" style="left:347.00px;top:1107.26px;letter-spacing:-0.021px;">EVOTEC\Administrator</div>
<div class="t" id="t173" style="left:506.00px;top:1098.56px;letter-spacing:0.156px;">28.04.2019</div>
<div class="t" id="t174" style="left:507.00px;top:1116.06px;letter-spacing:0.000px;">09:28:44</div>
<div class="t" id="t175" style="left:594.00px;top:1098.56px;letter-spacing:-0.259px;">CN=Test Przemyslaw</div>
<div class="t" id="t176" style="left:594.00px;top:1116.06px;letter-spacing:-0.184px;">Klys,OU=Users,OU=Production,DC=ad,DC=evotec,DC=xyz</div>
<div class="t" id="t177" style="left:968.00px;top:1107.26px;letter-spacing:0.277px;">primaryGroupID</div>
<div class="t" id="t178" style="left:1147.00px;top:1107.26px;letter-spacing:0.400px;">513</div>
<div class="t" id="t179" style="left:1502.00px;top:1107.26px;letter-spacing:0.133px;">8070349</div>
<div class="t" id="t180" style="left:1567.00px;top:1107.26px;letter-spacing:0.267px;">5136</div>
<div class="t" id="t181" style="left:1623.00px;top:1107.26px;letter-spacing:-0.500px;">AD1</div>
<div class="t" id="t182" style="left:1702.80px;top:1107.26px;letter-spacing:0.143px;">Security</div>
<div style="position:absolute;left:18px;top:1138px;width:1761px;height:44px;background:#f9f9f9"></div>
<div style="position:absolute;left:18px;top:1182px;width:1761px;height:1px;background:#ddd"></div>
<div class="t" id="t183" style="left:22.00px;top:1152.26px;letter-spacing:0.025px;">AD1.ad.evotec.xyz</div>
<div class="t" id="t184" style="left:142.60px;top:1143.56px;letter-spacing:0.144px;">A directory service</div>
<div class="t" id="t185" style="left:141.60px;top:1161.06px;letter-spacing:0.347px;">object was modified.</div>
<div class="t" id="t186" style="left:278.40px;top:1143.56px;letter-spacing:-0.350px;">Value</div>
<div class="t" id="t187" style="left:278.40px;top:1161.06px;letter-spacing:-0.100px;">Added</div>
<div class="t" id="t188" style="left:347.00px;top:1152.26px;letter-spacing:-0.021px;">EVOTEC\Administrator</div>
<div class="t" id="t189" style="left:506.00px;top:1143.56px;letter-spacing:0.156px;">28.04.2019</div>
<div class="t" id="t190" style="left:507.00px;top:1161.06px;letter-spacing:0.000px;">09:28:54</div>
<div class="t" id="t191" style="left:594.00px;top:1143.56px;letter-spacing:-0.259px;">CN=Test Przemyslaw</div>
<div class="t" id="t192" style="left:594.00px;top:1161.06px;letter-spacing:-0.184px;">Klys,OU=Users,OU=Production,DC=ad,DC=evotec,DC=xyz</div>
<div class="t" style="left:968.00px;top:1152.26px;">c</div>
<div class="t" id="t193" style="left:1147.00px;top:1152.26px;letter-spacing:-2.200px;">PL</div>
<div class="t" id="t194" style="left:1502.00px;top:1152.26px;letter-spacing:0.133px;">8070357</div>
<div class="t" id="t195" style="left:1567.00px;top:1152.26px;letter-spacing:0.267px;">5136</div>
<div class="t" id="t196" style="left:1623.00px;top:1152.26px;letter-spacing:-0.500px;">AD1</div>
<div class="t" id="t197" style="left:1702.80px;top:1152.26px;letter-spacing:0.143px;">Security</div>
<div style="position:absolute;left:18px;top:1227px;width:1761px;height:1px;background:#ddd"></div>
<div class="t" id="t198" style="left:22.00px;top:1197.26px;letter-spacing:0.025px;">AD1.ad.evotec.xyz</div>
<div class="t" id="t199" style="left:142.60px;top:1188.56px;letter-spacing:0.144px;">A directory service</div>
<div class="t" id="t200" style="left:141.60px;top:1206.06px;letter-spacing:0.347px;">object was modified.</div>
<div class="t" id="t201" style="left:278.40px;top:1188.56px;letter-spacing:-0.350px;">Value</div>
<div class="t" id="t202" style="left:277.40px;top:1206.06px;letter-spacing:0.267px;">Deleted</div>
<div class="t" id="t203" style="left:347.00px;top:1197.26px;letter-spacing:-0.021px;">EVOTEC\Administrator</div>
<div class="t" id="t204" style="left:506.00px;top:1188.56px;letter-spacing:0.156px;">28.04.2019</div>
<div class="t" id="t205" style="left:507.00px;top:1206.06px;letter-spacing:0.000px;">09:28:54</div>
<div class="t" id="t206" style="left:594.00px;top:1188.56px;letter-spacing:-0.259px;">CN=Test Przemyslaw</div>
<div class="t" id="t207" style="left:594.00px;top:1206.06px;letter-spacing:-0.184px;">Klys,OU=Users,OU=Production,DC=ad,DC=evotec,DC=xyz</div>
<div class="t" id="t208" style="left:968.00px;top:1197.26px;letter-spacing:0.200px;">countryCode</div>
<div class="t" style="left:1147.00px;top:1197.26px;">0</div>
<div class="t" id="t209" style="left:1502.00px;top:1197.26px;letter-spacing:0.133px;">8070358</div>
<div class="t" id="t210" style="left:1567.00px;top:1197.26px;letter-spacing:0.267px;">5136</div>
<div class="t" id="t211" style="left:1623.00px;top:1197.26px;letter-spacing:-0.500px;">AD1</div>
<div class="t" id="t212" style="left:1702.80px;top:1197.26px;letter-spacing:0.143px;">Security</div>
<div style="position:absolute;left:18px;top:1228px;width:1761px;height:44px;background:#f9f9f9"></div>
<div style="position:absolute;left:18px;top:1272px;width:1761px;height:1px;background:#ddd"></div>
<div class="t" id="t213" style="left:22.00px;top:1242.26px;letter-spacing:0.025px;">AD1.ad.evotec.xyz</div>
<div class="t" id="t214" style="left:142.60px;top:1233.56px;letter-spacing:0.144px;">A directory service</div>
<div class="t" id="t215" style="left:141.60px;top:1251.06px;letter-spacing:0.347px;">object was modified.</div>
<div class="t" id="t216" style="left:278.40px;top:1233.56px;letter-spacing:-0.350px;">Value</div>
<div class="t" id="t217" style="left:278.40px;top:1251.06px;letter-spacing:-0.100px;">Added</div>
<div class="t" id="t218" style="left:347.00px;top:1242.26px;letter-spacing:-0.021px;">EVOTEC\Administrator</div>
<div class="t" id="t219" style="left:506.00px;top:1233.56px;letter-spacing:0.156px;">28.04.2019</div>
<div class="t" id="t220" style="left:507.00px;top:1251.06px;letter-spacing:0.000px;">09:28:54</div>
<div class="t" id="t221" style="left:594.00px;top:1233.56px;letter-spacing:-0.259px;">CN=Test Przemyslaw</div>
<div class="t" id="t222" style="left:594.00px;top:1251.06px;letter-spacing:-0.184px;">Klys,OU=Users,OU=Production,DC=ad,DC=evotec,DC=xyz</div>
<div class="t" id="t223" style="left:968.00px;top:1242.26px;letter-spacing:0.200px;">countryCode</div>
<div class="t" id="t224" style="left:1147.00px;top:1242.26px;letter-spacing:0.000px;">616</div>
<div class="t" id="t225" style="left:1502.00px;top:1242.26px;letter-spacing:0.133px;">8070359</div>
<div class="t" id="t226" style="left:1567.00px;top:1242.26px;letter-spacing:0.267px;">5136</div>
<div class="t" id="t227" style="left:1623.00px;top:1242.26px;letter-spacing:-0.500px;">AD1</div>
<div class="t" id="t228" style="left:1702.80px;top:1242.26px;letter-spacing:0.143px;">Security</div>
<div style="position:absolute;left:18px;top:1317px;width:1761px;height:1px;background:#ddd"></div>
<div class="t" id="t229" style="left:22.00px;top:1287.26px;letter-spacing:0.025px;">AD1.ad.evotec.xyz</div>
<div class="t" id="t230" style="left:142.60px;top:1278.56px;letter-spacing:0.144px;">A directory service</div>
<div class="t" id="t231" style="left:141.60px;top:1296.06px;letter-spacing:0.347px;">object was modified.</div>
<div class="t" id="t232" style="left:278.40px;top:1278.56px;letter-spacing:-0.350px;">Value</div>
<div class="t" id="t233" style="left:278.40px;top:1296.06px;letter-spacing:-0.100px;">Added</div>
<div class="t" id="t234" style="left:347.00px;top:1287.26px;letter-spacing:-0.021px;">EVOTEC\Administrator</div>
<div class="t" id="t235" style="left:506.00px;top:1278.56px;letter-spacing:0.156px;">28.04.2019</div>
<div class="t" id="t236" style="left:507.00px;top:1296.06px;letter-spacing:0.000px;">09:28:54</div>
<div class="t" id="t237" style="left:594.00px;top:1278.56px;letter-spacing:-0.259px;">CN=Test Przemyslaw</div>
<div class="t" id="t238" style="left:594.00px;top:1296.06px;letter-spacing:-0.184px;">Klys,OU=Users,OU=Production,DC=ad,DC=evotec,DC=xyz</div>
<div class="t" id="t239" style="left:968.00px;top:1287.26px;letter-spacing:-0.200px;">co</div>
<div class="t" id="t240" style="left:1147.00px;top:1287.26px;letter-spacing:-0.080px;">Poland</div>
<div class="t" id="t241" style="left:1502.00px;top:1287.26px;letter-spacing:0.133px;">8070360</div>
<div class="t" id="t242" style="left:1567.00px;top:1287.26px;letter-spacing:0.267px;">5136</div>
<div class="t" id="t243" style="left:1623.00px;top:1287.26px;letter-spacing:-0.500px;">AD1</div>
<div class="t" id="t244" style="left:1702.80px;top:1287.26px;letter-spacing:0.143px;">Security</div>
<div style="position:absolute;left:18px;top:1318px;width:1761px;height:44px;background:#f9f9f9"></div>
<div class="t" id="t245" style="left:22.00px;top:1332.26px;letter-spacing:0.025px;">AD1.ad.evotec.xyz</div>
<div class="t" id="t246" style="left:142.60px;top:1323.56px;letter-spacing:0.144px;">A directory service</div>
<div class="t" id="t247" style="left:141.60px;top:1341.06px;letter-spacing:0.347px;">object was modified.</div>
<div class="t" id="t248" style="left:278.40px;top:1323.56px;letter-spacing:-0.350px;">Value</div>
<div class="t" id="t249" style="left:278.40px;top:1341.06px;letter-spacing:-0.100px;">Added</div>
<div class="t" id="t250" style="left:347.00px;top:1332.26px;letter-spacing:-0.021px;">EVOTEC\Administrator</div>
<div class="t" id="t251" style="left:506.00px;top:1323.56px;letter-spacing:0.156px;">28.04.2019</div>
<div class="t" id="t252" style="left:507.00px;top:1341.06px;letter-spacing:0.000px;">09:28:54</div>
<div class="t" id="t253" style="left:594.00px;top:1323.56px;letter-spacing:-0.259px;">CN=Test Przemyslaw</div>
<div class="t" id="t254" style="left:594.00px;top:1341.06px;letter-spacing:-0.184px;">Klys,OU=Users,OU=Production,DC=ad,DC=evotec,DC=xyz</div>
<div class="t" id="t255" style="left:968.00px;top:1332.26px;letter-spacing:0.000px;">postalCode</div>
<div class="t" id="t256" style="left:1147.00px;top:1332.26px;letter-spacing:0.160px;">40-508</div>
<div class="t" id="t257" style="left:1502.00px;top:1332.26px;letter-spacing:0.133px;">8070361</div>
<div class="t" id="t258" style="left:1567.00px;top:1332.26px;letter-spacing:0.267px;">5136</div>
<div class="t" id="t259" style="left:1623.00px;top:1332.26px;letter-spacing:-0.500px;">AD1</div>
<div class="t" id="t260" style="left:1702.80px;top:1332.26px;letter-spacing:0.143px;">Security</div>
<div class="t" id="t261" style="left:17.40px;top:1419.76px;letter-spacing:0.164px;color:#333;">Showing 1 to 15 of 38 entries</div>
<div class="pgb" style="left:1611px;top:1411px;width:25px;height:23px"></div>
<div class="t" style="left:1230.15px;top:1417.72px;width:600px;text-align:center;font-size:8.9px;line-height:12px;color:#666;">First</div>
<div class="t" style="left:1280.40px;top:1417.72px;width:600px;text-align:center;font-size:8.9px;line-height:12px;color:#666;">Previous</div>
<div class="t" style="left:1324.50px;top:1417.72px;width:600px;text-align:center;font-size:8.9px;line-height:12px;color:#333;">1</div>
<div class="t" style="left:1352.90px;top:1417.72px;width:600px;text-align:center;font-size:8.9px;line-height:12px;color:#333;">2</div>
<div class="t" style="left:1381.80px;top:1417.72px;width:600px;text-align:center;font-size:8.9px;line-height:12px;color:#333;">3</div>
<div class="t" style="left:1418.40px;top:1417.72px;width:600px;text-align:center;font-size:8.9px;line-height:12px;color:#666;">Next</div>
<div class="t" style="left:1460.05px;top:1417.72px;width:600px;text-align:center;font-size:8.9px;line-height:12px;color:#666;">Last</div>
<div class="t" id="t262" style="left:8.40px;top:1448.36px;letter-spacing:0.059px;">You can add more tables, and more things. You can even attach self which gives you</div>
<div class="t" id="t263" style="left:8.00px;top:1466.36px;letter-spacing:-0.041px;">couple of nice things... such as different JS/CSS.</div>
<div class="t" id="t264" style="left:8.00px;top:1502.36px;letter-spacing:0.152px;">Keep in mind this is still</div>
<div class="t" id="t265" style="left:153.20px;top:1502.36px;letter-spacing:-0.225px;"><b style="color:#87cefa;text-decoration:underline">work in progress!</b></div>
<div class="t" id="t266" style="left:7.40px;top:1538.36px;letter-spacing:0.083px;">Kind regards,</div>
<div class="t" id="t267" style="left:8.00px;top:1556.36px;letter-spacing:-0.250px;">Evotec IT</div>
</body></html>
